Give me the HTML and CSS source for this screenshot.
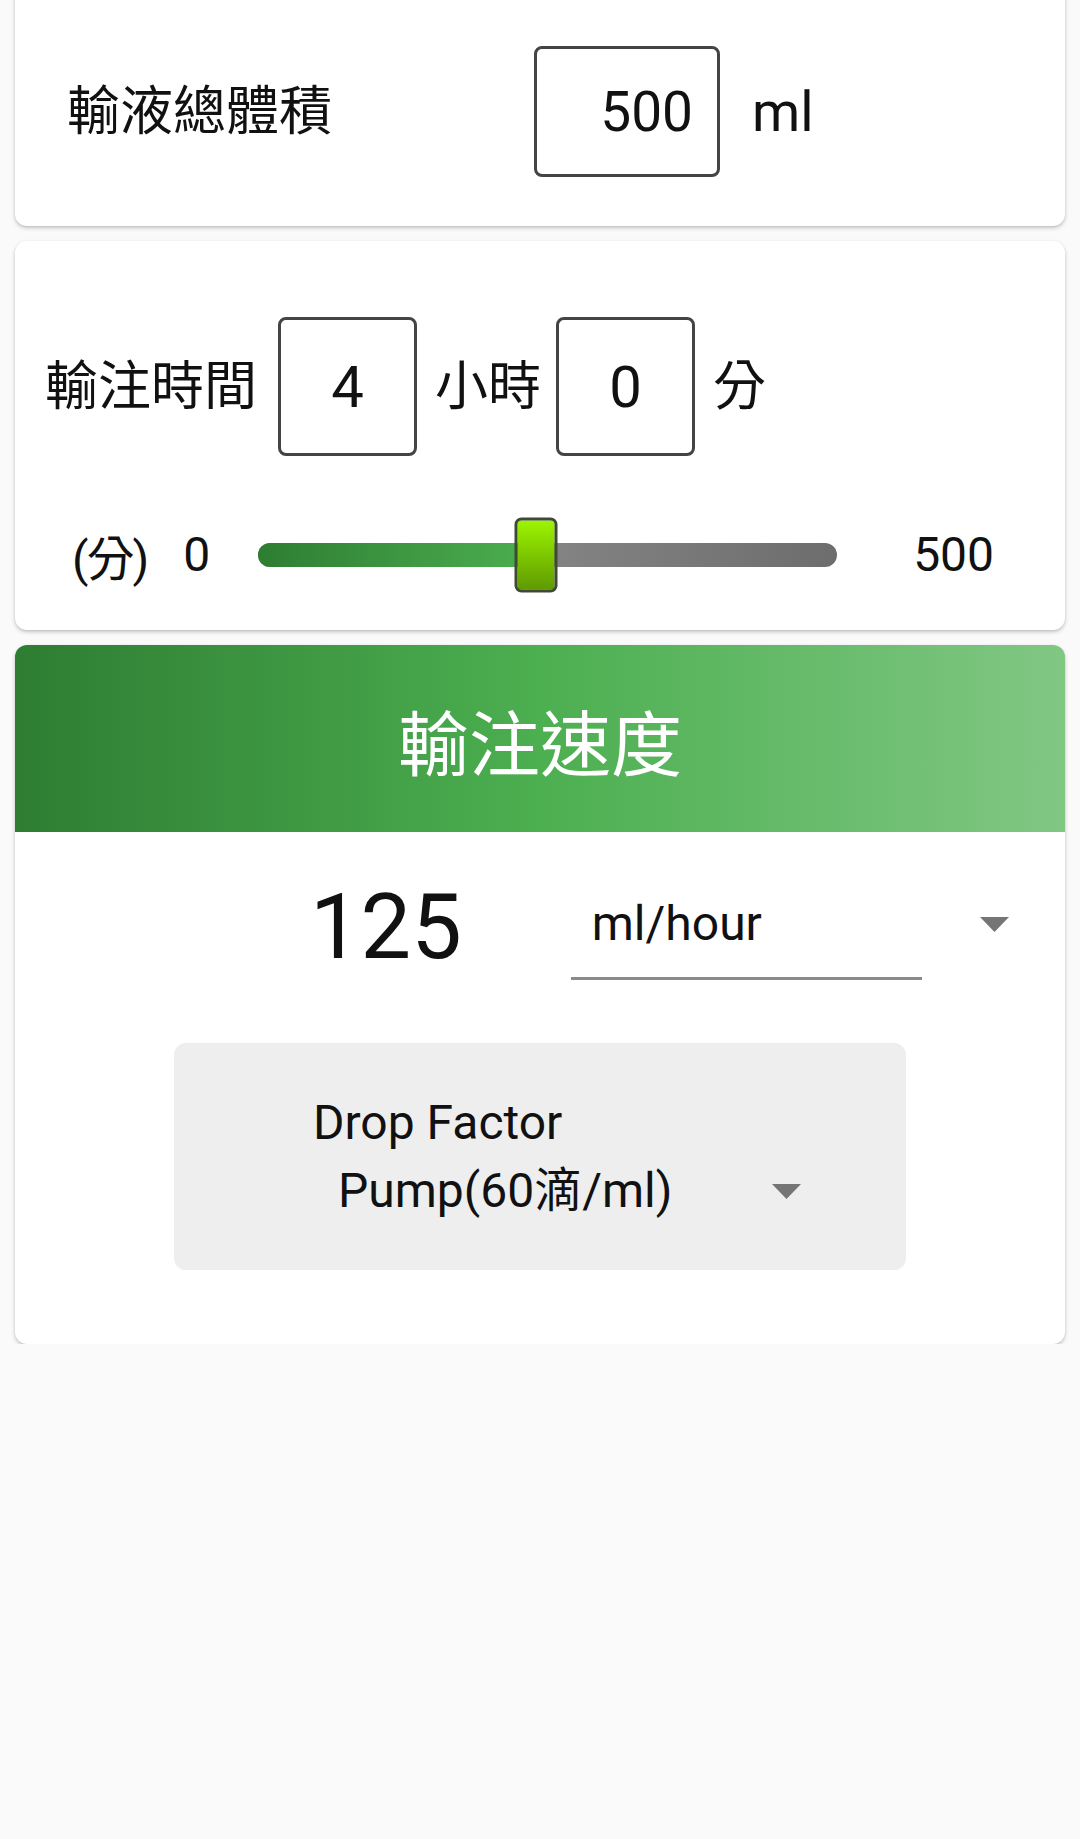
FILE: index.html
```html
<!DOCTYPE html>
<html lang="zh-Hant">
<head>
    <meta charset="UTF-8">
    <meta name="viewport" content="width=device-width, initial-scale=1.0">
    <title>輸注速度計算</title>
    <link rel="stylesheet" href="styles.css">
</head>
<body>
    <div class="page">
        <section class="card card-volume">
            <div class="volume-row">
                <span class="label">輸液總體積</span>
                <div class="num-box num-wide">500</div>
                <span class="unit">ml</span>
            </div>
        </section>

        <section class="card card-time">
            <div class="time-row">
                <span class="label">輸注時間</span>
                <div class="num-box">4</div>
                <span class="label">小時</span>
                <div class="num-box num-min">0</div>
                <span class="label">分</span>
            </div>
            <div class="slider-row">
                <span class="slider-unit">(分)</span>
                <span class="slider-min">0</span>
                <div class="track">
                    <div class="track-fill" style="width: 48%"></div>
                    <div class="thumb" style="left: 48%"></div>
                </div>
                <span class="slider-max">500</span>
            </div>
        </section>

        <section class="card card-rate">
            <div class="rate-header">輸注速度</div>
            <div class="rate-row">
                <span class="rate-value">125</span>
                <div class="unit-select">ml/hour</div>
                <svg class="caret" width="29" height="15" viewBox="0 0 29 15"><polygon points="0,0 29,0 14.5,15" /></svg>
            </div>
            <div class="drop-box">
                <div class="drop-label">Drop Factor</div>
                <div class="drop-select">
                    <span>Pump(60滴/ml)</span>
                    <svg class="caret" width="29" height="15" viewBox="0 0 29 15"><polygon points="0,0 29,0 14.5,15" /></svg>
                </div>
            </div>
        </section>
    </div>
</body>
</html>
```

FILE: styles.css
```css
body {
    margin: 0;
    background-color: #fafafa;
    font-family: Roboto, "Noto Sans CJK TC", sans-serif;
    color: #111;
}

.page {
    display: flex;
    flex-direction: column;
    gap: 15px;
    padding: 0 15px;
    margin-top: -20px;
}

.card {
    background: white;
    border-radius: 12px;
    box-shadow: 0 2px 4px rgba(0,0,0,0.2), 0 1px 2px rgba(0,0,0,0.08);
}

.label {
    font-size: 53px;
    line-height: 60px;
}

.num-box {
    box-sizing: border-box;
    width: 139px;
    height: 139px;
    border: 3px solid #444;
    border-radius: 8px;
    font-size: 58px;
    display: flex;
    align-items: center;
    justify-content: center;
}

/* 輸液總體積 */
.card-volume {
    padding: 66px 0 49px;
}

.volume-row {
    display: flex;
    align-items: center;
}

.volume-row .label {
    margin-left: 52px;
}

.num-wide {
    width: 186px;
    height: 131px;
    justify-content: flex-end;
    padding-right: 24px;
    margin-left: 202px;
    font-size: 55px;
}

.unit {
    font-size: 55px;
    margin-left: 32px;
}

/* 輸注時間 */
.card-time {
    padding: 76px 0 38px;
}

.time-row {
    display: flex;
    align-items: center;
    gap: 18px;
    padding-left: 30px;
}

.time-row .num-box {
    margin-left: 3px;
}

.time-row .num-min {
    margin-left: -3px;
}

.slider-row {
    display: flex;
    align-items: center;
    height: 75px;
    margin-top: 61px;
    padding-left: 57px;
    font-size: 48px;
}

.slider-unit {
    letter-spacing: -2px;
}

.slider-min {
    margin-left: 36px;
}

.track {
    position: relative;
    width: 579px;
    height: 24px;
    margin-left: 48px;
    border-radius: 12px;
    background: linear-gradient(to right, #9a9a9a, #6d6d6d);
}

.track-fill {
    height: 100%;
    border-radius: 12px 0 0 12px;
    background: linear-gradient(to right, #2e7d32, #4caf50);
}

.thumb {
    position: absolute;
    top: 50%;
    box-sizing: border-box;
    width: 43px;
    height: 75px;
    transform: translate(-50%, -50%);
    border: 3px solid #3f4a34;
    border-radius: 7px;
    background: linear-gradient(to bottom, #9cf500, #5f9a00);
}

.slider-max {
    margin-left: 76px;
}

/* 輸注速度 */
.card-rate {
    overflow: hidden;
    padding-bottom: 74px;
}

.rate-header {
    height: 187px;
    display: flex;
    align-items: center;
    justify-content: center;
    font-size: 71px;
    color: white;
    background: linear-gradient(to right, #2e7d32, #4caf50 50%, #81c784);
}

.rate-row {
    display: flex;
    align-items: center;
    height: 111px;
    margin-top: 37px;
}

.rate-value {
    font-size: 90px;
    line-height: 111px;
    padding-top: 6px;
    margin-left: 295px;
}

.unit-select {
    box-sizing: border-box;
    width: 351px;
    height: 111px;
    margin-left: 109px;
    padding-left: 21px;
    display: flex;
    align-items: center;
    font-size: 48px;
    border-bottom: 3px solid #8a8a8a;
}

.caret {
    fill: #757575;
    flex-shrink: 0;
}

.rate-row .caret {
    margin-left: 58px;
}

.drop-box {
    width: 732px;
    margin: 63px auto 0;
    padding: 50px 0 49px;
    background: #eeeeee;
    border-radius: 12px;
    font-size: 48px;
    line-height: 60px;
}

.drop-label {
    margin-left: 139px;
}

.drop-select {
    display: flex;
    align-items: center;
    justify-content: space-between;
    width: 463px;
    margin: 8px 0 0 164px;
}
```
